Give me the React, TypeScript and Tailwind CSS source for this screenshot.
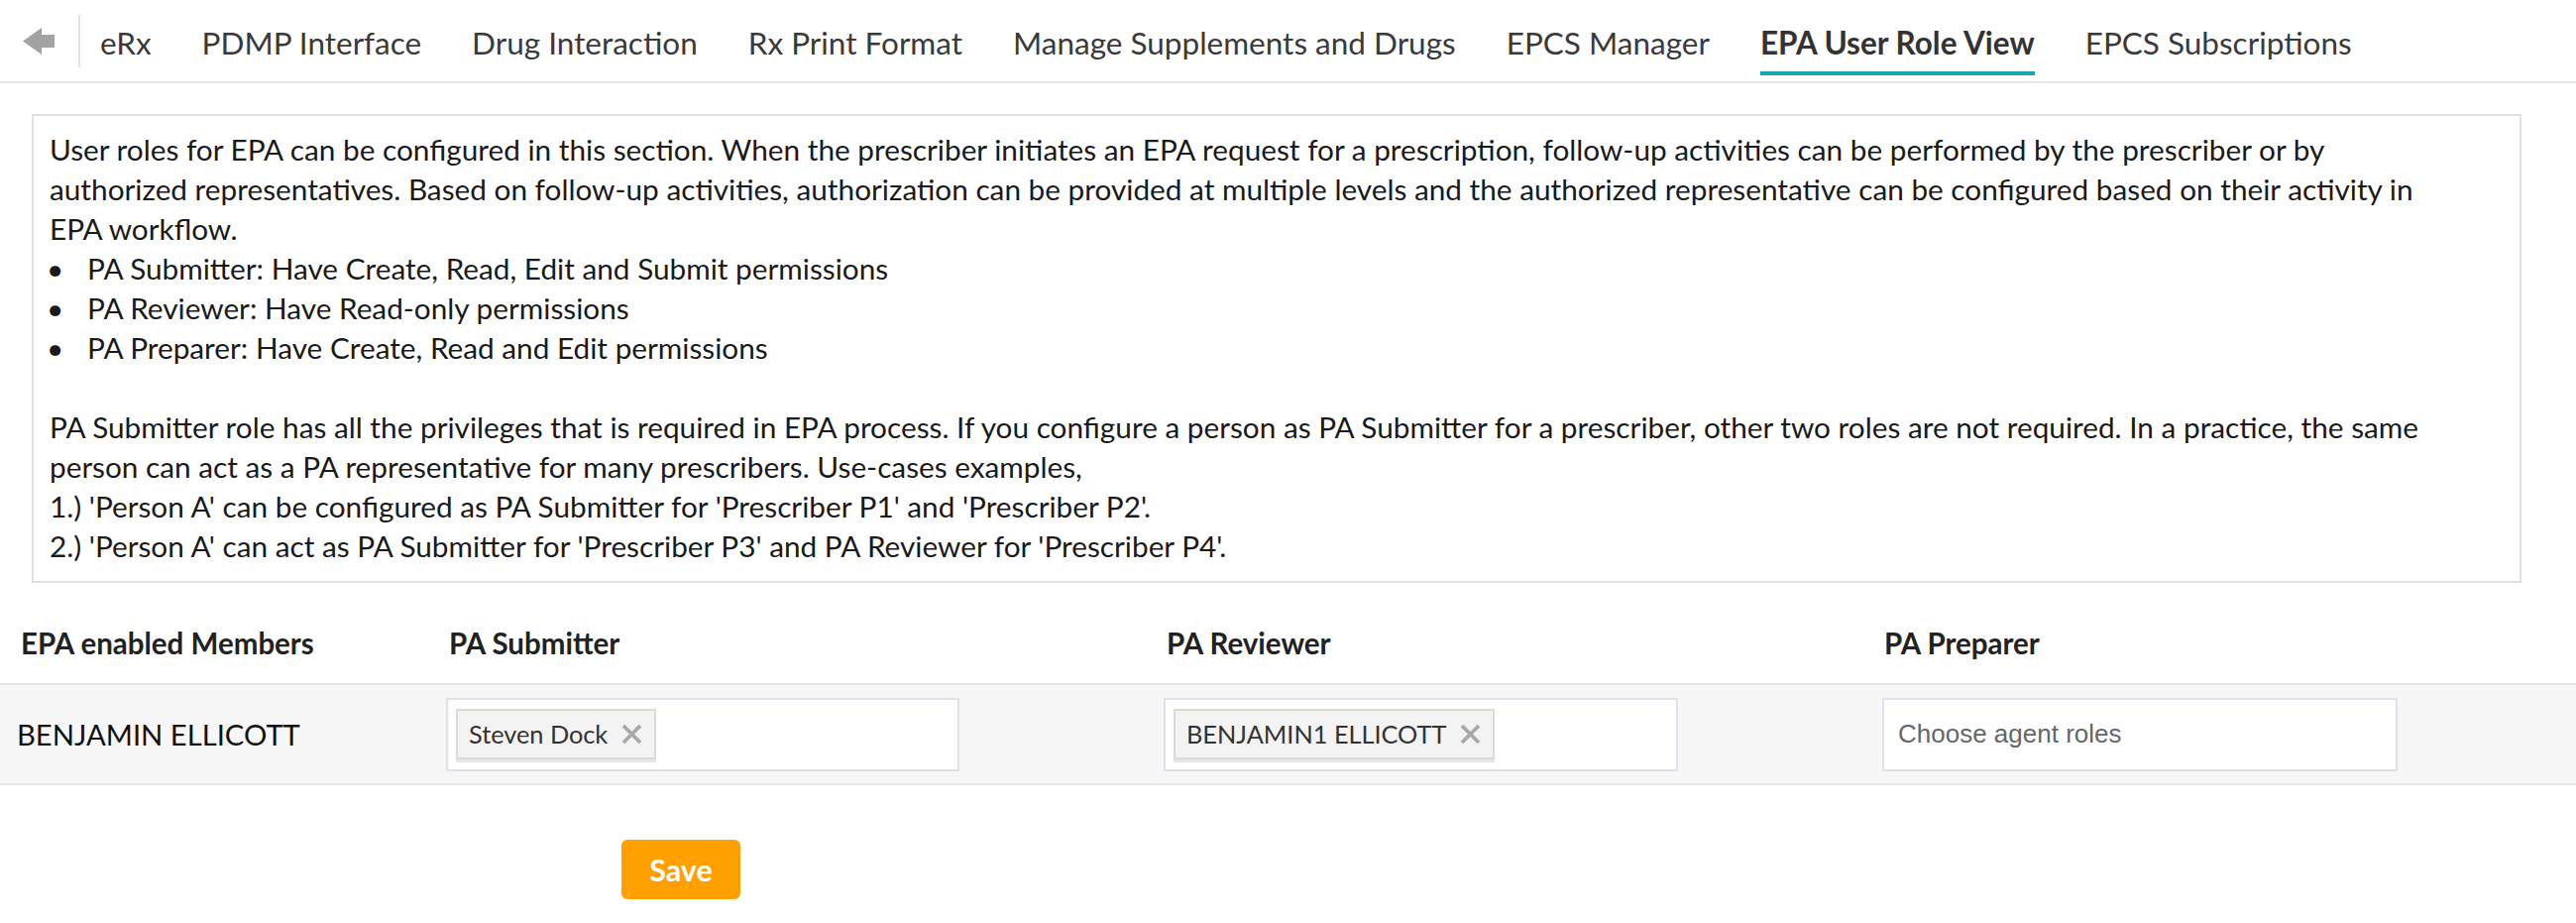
import React from "react";

const tabs = [
  "eRx",
  "PDMP Interface",
  "Drug Interaction",
  "Rx Print Format",
  "Manage Supplements and Drugs",
  "EPCS Manager",
  "EPA User Role View",
  "EPCS Subscriptions",
];

function XIcon() {
  return (
    <svg width="21" height="21" viewBox="0 0 21 21" className="shrink-0">
      <path d="M2 2 L19 19 M19 2 L2 19" stroke="#a8a8a8" strokeWidth="3.8" strokeLinecap="butt" />
    </svg>
  );
}

function Chip({ label }: { label: string }) {
  return (
    <div className="h-[51px] flex items-center gap-[14px] pl-[11px] pr-[12px] bg-[#f3f3f3] border-2 border-[#dadada] shadow-[0_3px_0_#e6e6e6] text-[#333] text-[25.3px] leading-none">
      <span>{label}</span>
      <XIcon />
    </div>
  );
}

export default function App() {
  return (
    <div className="w-[2599px] min-h-[931px] bg-white text-[#222] font-['Lato',sans-serif]">
      {/* Top nav */}
      <div className="h-[84px] border-b-2 border-[#e6e6e6] flex items-stretch">
        <div className="flex items-center pl-[23px]">
          <svg width="32" height="27" viewBox="0 0 32 27">
            <polygon points="0,13.5 19,0 19,27" fill="#a3a3a3" />
            <rect x="18" y="7" width="14" height="13" fill="#a3a3a3" />
          </svg>
        </div>
        <div className="flex items-center ml-[24px]">
          <div className="w-[2px] h-[53px] bg-[#e3e3e3]" />
        </div>
        <div className="flex items-stretch ml-[20px] gap-[51px]">
          {tabs.map((t) => {
            const active = t === "EPA User Role View";
            return (
              <div key={t} className="relative flex items-center pt-[3px]">
                <span
                  className={
                    "text-[31.5px] leading-[38px] whitespace-nowrap " +
                    (active ? "font-bold text-[#333]" : "text-[#3a3a3a]")
                  }
                >
                  {t}
                </span>
                {active && (
                  <div className="absolute left-0 right-0 bottom-[6px] h-[4px] bg-[#1ca6a9]" />
                )}
              </div>
            );
          })}
        </div>
      </div>

      {/* Info box */}
      <div className="ml-[32px] mr-[55px] mt-[31px] border-2 border-[#e0e0e0] pl-[16px] pr-[92px] pt-[14px] pb-[15px] text-[29.75px] leading-[40px] text-[#1a1a1a]">
        <p>
          User roles for EPA can be configured in this section. When the prescriber initiates an EPA request for a prescription, follow-up activities can be performed by the prescriber or by authorized representatives. Based on follow-up activities, authorization can be provided at multiple levels and the authorized representative can be configured based on their activity in EPA workflow.
        </p>
        <ul>
          {[
            "PA Submitter: Have Create, Read, Edit and Submit permissions",
            "PA Reviewer: Have Read-only permissions",
            "PA Preparer: Have Create, Read and Edit permissions",
          ].map((b) => (
            <li key={b} className="flex">
              <span className="w-[41px] -ml-[3px] shrink-0">•</span>
              <span>{b}</span>
            </li>
          ))}
        </ul>
        <div className="h-[40px]" />
        <p>
          PA Submitter role has all the privileges that is required in EPA process. If you configure a person as PA Submitter for a prescriber, other two roles are not required. In a practice, the same person can act as a PA representative for many prescribers. Use-cases examples,
        </p>
        <p>1.) 'Person A' can be configured as PA Submitter for 'Prescriber P1' and 'Prescriber P2'.</p>
        <p>2.) 'Person A' can act as PA Submitter for 'Prescriber P3' and PA Reviewer for 'Prescriber P4'.</p>
      </div>

      {/* Table header */}
      <div className="grid grid-cols-[440px_724px_725px_1fr] pt-[44px] pb-[24px] text-[29.5px] leading-[33px] font-bold text-[#222]">
        <div className="pl-[21px]">EPA enabled Members</div>
        <div className="pl-[13px]">PA Submitter</div>
        <div className="pl-[13px]">PA Reviewer</div>
        <div className="pl-[12px]">PA Preparer</div>
      </div>

      {/* Data row */}
      <div className="grid grid-cols-[440px_724px_725px_1fr] items-center h-[103px] border-y-2 border-[#e6e6e6] bg-[#f7f7f7]">
        <div className="pl-[17px] text-[29.2px] text-[#111]">BENJAMIN ELLICOTT</div>
        <div className="pl-[10px]">
          <div className="w-[518px] h-[74px] bg-white border-2 border-[#dde1ea] flex items-center pl-[8px]">
            <Chip label="Steven Dock" />
          </div>
        </div>
        <div className="pl-[10px]">
          <div className="w-[519px] h-[74px] bg-white border-2 border-[#dde1ea] flex items-center pl-[8px]">
            <Chip label="BENJAMIN1 ELLICOTT" />
          </div>
        </div>
        <div className="pl-[10px]">
          <div className="w-[520px] h-[74px] bg-white border-2 border-[#dde1ea] flex items-center pl-[14px]">
            <span className="text-[26px] text-[#666] font-['Liberation_Sans',Arial,sans-serif]">Choose agent roles</span>
          </div>
        </div>
      </div>

      {/* Save */}
      <div className="pl-[627px] pt-[55px]">
        <button className="w-[120px] h-[60px] rounded-[6px] bg-[#ff9f00] text-white font-bold text-[30.5px] leading-none">
          Save
        </button>
      </div>
    </div>
  );
}
